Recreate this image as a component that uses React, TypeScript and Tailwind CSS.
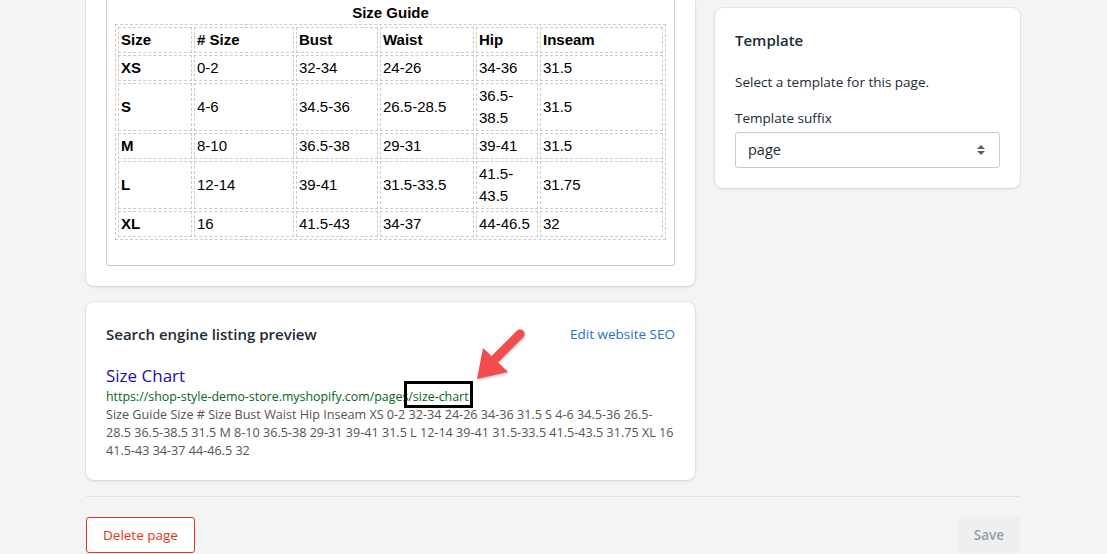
import React from 'react';

const rows = [
  ['XS', '0-2', '32-34', '24-26', '34-36', '31.5'],
  ['S', '4-6', '34.5-36', '26.5-28.5', '36.5-38.5', '31.5'],
  ['M', '8-10', '36.5-38', '29-31', '39-41', '31.5'],
  ['L', '12-14', '39-41', '31.5-33.5', '41.5-43.5', '31.75'],
  ['XL', '16', '41.5-43', '34-37', '44-46.5', '32'],
];

const headers = ['Size', '# Size', 'Bust', 'Waist', 'Hip', 'Inseam'];

const cardShadow =
  'shadow-[0_0_0_1px_rgba(63,63,68,0.05),0_1px_3px_0_rgba(63,63,68,0.15)]';

function SizeTable() {
  return (
    <table className="w-[551px] table-fixed border-separate border-spacing-[2px] border border-dashed border-[#cccccc] font-['Liberation_Sans',Arial,sans-serif] text-[15px] leading-[22px] text-black">
      <caption className="pb-[2px] text-[15px] font-bold leading-[18px]">Size Guide</caption>
      <colgroup>
        <col className="w-[74px]" />
        <col className="w-[100px]" />
        <col className="w-[82px]" />
        <col className="w-[94px]" />
        <col className="w-[62px]" />
        <col className="w-[123px]" />
      </colgroup>
      <tbody>
        <tr>
          {headers.map((h) => (
            <th
              key={h}
              className="border border-dashed border-[#cccccc] px-[2px] py-[1px] text-left font-bold"
            >
              {h}
            </th>
          ))}
        </tr>
        {rows.map((row) => (
          <tr key={row[0]}>
            {row.map((cell, i) => (
              <td
                key={i}
                className={`border border-dashed border-[#cccccc] px-[2px] py-[1px] align-middle ${
                  i === 0 ? 'font-bold' : ''
                }`}
              >
                {cell}
              </td>
            ))}
          </tr>
        ))}
      </tbody>
    </table>
  );
}

function Arrow() {
  return (
    <svg
      width="60"
      height="62"
      viewBox="0 0 60 62"
      className="pointer-events-none absolute -top-[64px] left-full ml-[3px] drop-shadow-[1px_1px_1px_rgba(0,0,0,0.25)]"
    >
      <line x1="48" y1="10" x2="24" y2="34" stroke="#f24c4f" strokeWidth="9" strokeLinecap="round" />
      <polygon points="5,55 11,24 36,48" fill="#f24c4f" />
    </svg>
  );
}

export default function App() {
  return (
    <div className="min-h-[554px] overflow-hidden bg-[#f4f4f4] font-['Open_Sans',sans-serif] text-[#212b36]">
      <div className="ml-[86px] w-[934px]">
        <div className="grid grid-cols-[609px_305px] items-start gap-5">
          {/* Main column */}
          <div className="flex flex-col gap-4">
            <section className={`rounded-b-lg bg-white px-5 pb-5 ${cardShadow}`}>
              <div className="rounded-b-[3px] border-x border-b border-[#c4cdd5] pb-[25px] pl-2 pr-[9px] pt-1">
                <SizeTable />
              </div>
            </section>

            <section className={`rounded-lg bg-white p-5 ${cardShadow}`}>
              <div className="flex items-center justify-between">
                <h2 className="text-[15px] font-semibold leading-6">Search engine listing preview</h2>
                <a className="text-[13.5px] leading-5 text-[#2c6ecb]">Edit website SEO</a>
              </div>
              <div className="mt-[18px]">
                <p className="text-[17px] leading-6 text-[#1a0dab]">Size Chart</p>
                <p className="text-[12.4px] leading-[18px] text-[#006621]">
                  https://shop-style-demo-store.myshopify.com/page
                  <span className="relative">
                    s/size-chart
                    <span className="absolute -bottom-[3px] left-[2px] -right-[4px] -top-[7px] border-[3px] border-black" />
                    <Arrow />
                  </span>
                </p>
                <p className="text-[12.6px] leading-[18px] text-[#545454]">
                  Size Guide Size # Size Bust Waist Hip Inseam XS 0-2 32-34 24-26 34-36 31.5 S 4-6 34.5-36 26.5-28.5
                  36.5-38.5 31.5 M 8-10 36.5-38 29-31 39-41 31.5 L 12-14 39-41 31.5-33.5 41.5-43.5 31.75 XL 16 41.5-43
                  34-37 44-46.5 32
                </p>
              </div>
            </section>
          </div>

          {/* Sidebar */}
          <section className={`mt-2 rounded-lg bg-white p-5 ${cardShadow}`}>
            <h2 className="text-[15px] font-semibold leading-6">Template</h2>
            <p className="mt-5 text-[13.5px] leading-5">Select a template for this page.</p>
            <label className="mt-4 block text-[13.5px] leading-5">Template suffix</label>
            <div className="mt-1 flex h-9 items-center justify-between rounded-[3px] border border-[#c4cdd5] pl-3 pr-[13px] text-[14.5px] shadow-[inset_0_1px_0_0_rgba(99,115,129,0.05)]">
              <span>page</span>
              <svg width="10" height="14" viewBox="0 0 10 14" className="text-[#5c5f62]">
                <path d="M5 2 L9 6 H1 Z" fill="currentColor" />
                <path d="M5 12 L1 8 H9 Z" fill="currentColor" />
              </svg>
            </div>
          </section>
        </div>

        <div className="mt-4 border-t border-[#dfe3e8]" />

        <div className="mt-5 flex items-center justify-between">
          <button className="h-9 rounded-[3px] border border-[#de3618] bg-white px-4 text-[13.5px] text-[#de3618]">
            Delete page
          </button>
          <button className="h-9 rounded-[3px] bg-[#efefef] px-4 text-[13.5px] font-semibold text-[#919eab]">
            Save
          </button>
        </div>
      </div>
    </div>
  );
}
